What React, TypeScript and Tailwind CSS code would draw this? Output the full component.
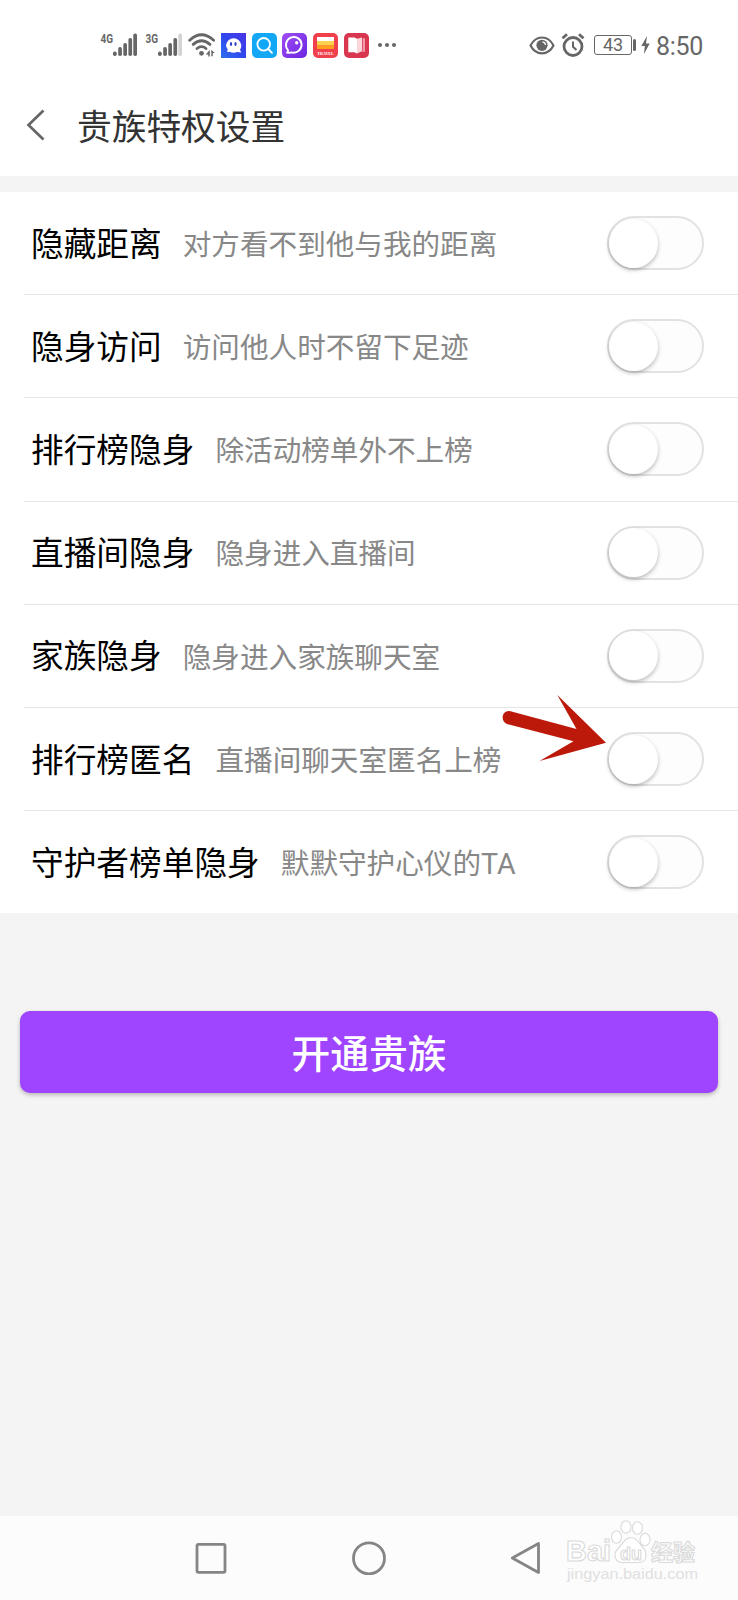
const settings = [
  { label: "隐藏距离", hint: "对方看不到他与我的距离" },
  { label: "隐身访问", hint: "访问他人时不留下足迹" },
  { label: "排行榜隐身", hint: "除活动榜单外不上榜" },
  { label: "直播间隐身", hint: "隐身进入直播间" },
  { label: "家族隐身", hint: "隐身进入家族聊天室" },
  { label: "排行榜匿名", hint: "直播间聊天室匿名上榜", arrow: true },
  { label: "守护者榜单隐身", hint: "默默守护心仪的TA" },
];

const SignalIcon = ({ type, weak }: { type: string; weak?: boolean }) => (
  <svg className="h-[28px] w-[37px] flex-none" viewBox="0 0 37 28" fill="#666">
    <text
      x="0.5"
      y="12.2"
      fontSize="13"
      fontWeight="700"
      textLength="12.5"
      lengthAdjust="spacingAndGlyphs"
      fontFamily="Roboto, sans-serif"
    >
      {type}
    </text>
    <rect x="13" y="20.5" width="3.7" height="4.5" rx="1.7" />
    <rect x="18.2" y="16" width="3.7" height="9" rx="1.7" />
    <rect x="23.3" y="12" width="3.7" height="13" rx="1.7" />
    <rect x="28.4" y="7" width="3.7" height="18" rx="1.7" />
    <rect
      x="33.3"
      y="2.5"
      width="3.7"
      height="22.5"
      rx="1.7"
      fill={weak ? "#d3d3d3" : "#666"}
    />
  </svg>
);

const WifiIcon = () => (
  <svg className="h-[28px] w-[28px] flex-none" viewBox="0 0 28 28">
    <g fill="none" stroke="#666" strokeWidth="2.8" strokeLinecap="round">
      <path d="M1.7 9.2Q13.5-1.800 25.6 9.2" />
      <path d="M5.2 13.4Q13.5 6 22 13.4" />
      <path d="M9 17.5Q13.5 13.8 18 17.5" />
    </g>
    <circle cx="13.5" cy="22.3" r="2.4" fill="#666" />
    <path d="M21.8 19v6.5h-1.5v-2h-2.6zM23.3 18.8l3.5 3.2h-2v3.2h-1.5z" fill="#666" />
  </svg>
);

const AppIcons = () => (
  <div className="flex gap-[5.7px]">
    <svg className="h-[25px] w-[25px]" viewBox="0 0 25 25">
      <defs>
        <linearGradient id="ghost" x1="0" y1="1" x2="1" y2="0">
          <stop offset="0" stopColor="#2b70ee" />
          <stop offset="0.5" stopColor="#3047ee" />
          <stop offset="1" stopColor="#4a35e4" />
        </linearGradient>
      </defs>
      <rect width="25" height="25" fill="url(#ghost)" />
      <path
        d="M5 12a7.7 7.7 0 0 1 15.300 0c0 2-.5 3.500-1.300 4.700l1.300 2.800-4.300-.6c-1 .5-2.200.8-3.500.8-1.500 0-2.700-.3-3.700-1-1 .6-2.800.4-2.800-.6 0-.6.800-.9.800-1.400 0-.9-1.800-2-1.800-4.700z"
        fill="#fff"
      />
      <ellipse cx="10" cy="11" rx="1.1" ry="2" fill="#2c3fc8" />
      <ellipse cx="14.5" cy="11" rx="1.1" ry="2" fill="#2c3fc8" />
    </svg>
    <svg className="h-[25px] w-[25px]" viewBox="0 0 25 25" fill="none">
      <rect width="25" height="25" rx="5" fill="#12a8f5" />
      <circle cx="11.7" cy="11.3" r="6.3" stroke="#fff" strokeWidth="1.8" />
      <path d="m16.3 16 3.700 3.800" stroke="#fff" strokeWidth="1.8" strokeLinecap="round" />
    </svg>
    <svg className="h-[25px] w-[25px]" viewBox="0 0 25 25" fill="none">
      <defs>
        <linearGradient id="chat" x1="0" y1="0" x2="1" y2="1">
          <stop offset="0" stopColor="#a04df5" />
          <stop offset="1" stopColor="#6a26e0" />
        </linearGradient>
      </defs>
      <rect width="25" height="25" rx="5" fill="url(#chat)" />
      <path
        d="M5 19.600c1-.7 1.400-1.500 1-2.500a7.800 7.800 0 1 1 3.800 2.300c-1.500.5-3.200.5-4.800.2z"
        stroke="#fff"
        strokeWidth="1.9"
        strokeLinejoin="round"
      />
      <circle cx="14.7" cy="9.8" r="1.7" fill="#fff" />
    </svg>
    <svg className="h-[25px] w-[25px]" viewBox="0 0 25 25">
      <rect width="25" height="25" rx="5" fill="#f0404b" />
      <path d="M4 4h17v4H4z" fill="#fff" />
      <path d="M4 8h17v4.500H4z" fill="#ffd24d" />
      <path d="M4 12.500h17V16H4z" fill="#ff9f1c" />
      <text
        x="4.3"
        y="22.3"
        fontSize="5"
        fontWeight="700"
        fill="#fff"
        textLength="16.5"
        lengthAdjust="spacingAndGlyphs"
        fontFamily="Liberation Serif, serif"
      >
        TRAVEL
      </text>
    </svg>
    <svg className="h-[25px] w-[25px]" viewBox="0 0 25 25">
      <rect width="25" height="25" rx="5" fill="#d9364f" />
      <path d="M4.300 4.500h6.200l2.500 1.200v14.800l-2.500-1.300H4.300z" fill="#fff" />
      <path d="M13 5.700 18 4.500v13.700l-5 2.300z" fill="#fbd5da" />
      <path d="M18.700 5.200h2.300v13.500l-5.500.4 3.200-.9z" fill="#f19aa8" />
    </svg>
  </div>
);

const StatusBar = () => (
  <div className="flex h-[76px] items-start pr-[35px] pl-[100px] pt-[31px] text-[#666]">
    <SignalIcon type="4G" />
    <div className="ml-[8px] flex">
      <SignalIcon type="3G" weak />
    </div>
    <div className="ml-[6px]">
      <WifiIcon />
    </div>
    <div className="ml-[5px] mt-[2px]">
      <AppIcons />
    </div>
    <div className="ml-[9.5px] mt-[12px] flex gap-[3px]">
      <span className="size-[4px] rounded-full bg-[#666]" />
      <span className="size-[4px] rounded-full bg-[#666]" />
      <span className="size-[4px] rounded-full bg-[#666]" />
    </div>
    <div className="ml-auto flex items-start">
      <svg className="mt-[2px] h-[25px] w-[26px]" viewBox="0 0 26 25" fill="none">
        <path
          d="M1.500 12.500C7 1.800 19 1.800 24.500 12.500 19 23 7 23 1.500 12.500z"
          stroke="#666"
          strokeWidth="2.2"
          strokeLinejoin="round"
        />
        <circle cx="13" cy="12.3" r="5.6" fill="#666" />
        <path d="M13.500 8.800a3.500 3.500 0 0 1 3 3" stroke="#fff" strokeWidth="1.3" />
      </svg>
      <svg className="ml-[6px] mt-[1px] h-[26px] w-[24px]" viewBox="0 0 24 26" fill="none">
        <circle cx="12" cy="14.5" r="9" stroke="#666" strokeWidth="2.8" />
        <path d="M12 9.500v5.300l3.500 3.300" stroke="#666" strokeWidth="2" />
        <path d="M1.500 6.300 6 2.300M22.500 6.300 18 2.300" stroke="#666" strokeWidth="2.8" />
      </svg>
      <div className="ml-[9px] mt-[4px] flex h-[20px] w-[38px] items-center justify-center rounded-[3px] border border-[#666] font-['Roboto',sans-serif] text-[18px] leading-none">
        43
      </div>
      <span className="ml-px mt-[8px] h-[12px] w-[3px] rounded-sm bg-[#666]" />
      <svg className="ml-[5px] mt-[5px] h-[18px] w-[9px]" viewBox="0 0 9 18">
        <path d="M6 0 .3 10H3.800L3 18l5.700-10.500H5z" fill="#666" />
      </svg>
      <span className="ml-[6px] mt-[3px] w-[47px] font-['Roboto',sans-serif] text-[25px] leading-[25px] tracking-[-0.3px]">
        8:50
      </span>
    </div>
  </div>
);

const Toggle = () => (
  <div className="flex h-[54px] w-[96.5px] items-center rounded-full border-2 border-[#e2e2e2] bg-[#fdfdfd]">
    <span className="size-[49px] rounded-full bg-white shadow-[0_2px_4px_rgba(0,0,0,0.27)]" />
  </div>
);

const Arrow = () => (
  <svg
    className="absolute left-[502px] top-[-14px] h-[70px] w-[106px]"
    viewBox="0 0 106 70"
    fill="#bd190b"
  >
    <path d="M8.500 17.200 74.500 35 55.300 1 104 48.700 37.500 67 71.500 47.300 5.500 30.200C-2.500 27 0 15.500 8.500 17.200z" />
  </svg>
);

const Watermark = () => (
  <svg
    className="absolute left-[564px] top-0 h-[84px] w-[150px]"
    viewBox="0 0 150 84"
    fill="#fff"
    stroke="#dadada"
    strokeWidth="1.1"
  >
    <g fontFamily="Liberation Sans, sans-serif" fontWeight="700">
      <text x="2" y="45" fontSize="29" textLength="45" lengthAdjust="spacingAndGlyphs">
        Bai
      </text>
      <ellipse cx="52.5" cy="21" rx="5" ry="6.3" />
      <ellipse cx="62" cy="11" rx="5" ry="6.3" />
      <ellipse cx="73.5" cy="12" rx="5" ry="6.3" />
      <ellipse cx="81" cy="23.5" rx="5" ry="6.3" />
      <path d="M67 21.500c6 0 8 6 12 10s5 15-4 15c-5 0-13 0-16 0-9 0-10-9-5-14s7-11 13-11z" />
      <text x="56" y="43.5" fontSize="19" textLength="22" lengthAdjust="spacingAndGlyphs">
        du
      </text>
      <text x="87" y="44" fontSize="22" fontFamily="Noto Sans CJK SC, sans-serif">
        经验
      </text>
      <text
        x="3"
        y="63"
        fontSize="15"
        textLength="131"
        lengthAdjust="spacingAndGlyphs"
        fill="#e0e0e0"
        stroke="none"
        fontWeight="400"
      >
        jingyan.baidu.com
      </text>
    </g>
  </svg>
);

const NavBar = () => (
  <div className="relative h-[84px] bg-[#fcfcfc]">
    <div className="flex items-start pl-[195px] pt-[25px]">
      <svg className="h-[34px] w-[32px]" viewBox="0 0 32 34" fill="none">
        <rect x="2" y="3.3" width="28" height="28" rx="1.5" stroke="#858585" strokeWidth="2.8" />
      </svg>
      <svg className="ml-[125px] h-[34px] w-[34px]" viewBox="0 0 34 34" fill="none">
        <circle cx="17" cy="17.3" r="15.5" stroke="#858585" strokeWidth="2.8" />
      </svg>
      <svg className="ml-[124px] h-[34px] w-[32px]" viewBox="0 0 32 34" fill="none">
        <path
          d="M28.500 2.500v29L2.300 17z"
          stroke="#858585"
          strokeWidth="2.8"
          strokeLinejoin="round"
        />
      </svg>
    </div>
    <Watermark />
  </div>
);

const App = () => {
  return (
    <div className="flex h-[1600px] w-[738px] flex-col overflow-hidden bg-[#f4f4f4] font-['Noto_Sans_CJK_SC',sans-serif]">
      <header className="h-[176px] bg-white">
        <StatusBar />
        <div className="flex h-[100px] items-center pb-[2px] pl-[26px]">
          <svg className="h-[32px] w-[20px]" viewBox="0 0 20 32" fill="none">
            <path d="M17.500 1.500 2.500 16l15 14.500" stroke="#666" strokeWidth="2.7" />
          </svg>
          <h1 className="ml-[31px] text-[34.7px] leading-none text-[#333]">
            贵族特权设置
          </h1>
        </div>
      </header>

      <main className="mt-4 h-[721px] overflow-hidden bg-white">
        {settings.map((item) => (
          <div key={item.label} className="relative pl-6">
            <div className="flex h-[103.2px] items-center border-b border-[#e6e6e6] pr-[34.5px] pl-[7px]">
              <span className="pb-[2px] text-[32.7px] leading-none text-black">
                {item.label}
              </span>
              <span className="ml-[21px] pt-[4px] font-['Roboto','Noto_Sans_CJK_SC',sans-serif] text-[28.6px] leading-none text-[#888]">
                {item.hint}
              </span>
              <div className="ml-auto">
                <Toggle />
              </div>
            </div>
            {item.arrow && <Arrow />}
          </div>
        ))}
      </main>

      <button className="mx-5 mt-[98px] h-[82px] flex-none rounded-[10px] bg-[#9f44ff] pb-[2px] text-[38.8px] leading-none font-medium text-white shadow-[0_2px_4px_rgba(0,0,0,0.25)]">
        开通贵族
      </button>

      <div className="mt-auto">
        <NavBar />
      </div>
    </div>
  );
};

export default App;
